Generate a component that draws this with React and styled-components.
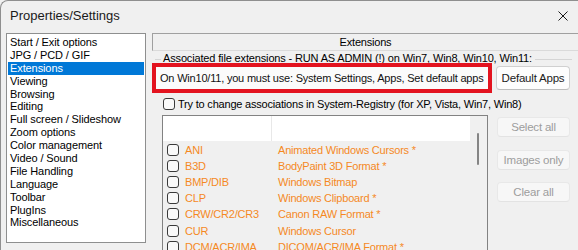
import React from "react";
import styled, { createGlobalStyle } from "styled-components";

const GlobalStyle = createGlobalStyle`
  html, body {
    margin: 0;
    padding: 0;
    background: #f0f0f0;
  }
  body {
    width: 578px;
    height: 250px;
    overflow: hidden;
    font-family: "Liberation Sans", Arial, sans-serif;
    color: #000;
  }
`;

const Window = styled.div`
  width: 578px;
  height: 250px;
  box-sizing: border-box;
  border-left: 1px solid #8f8f8f;
  border-top: 1px solid #8f8f8f;
  border-top-left-radius: 8px;
  background: #f0f0f0;
  display: flex;
  flex-direction: column;
  overflow: hidden;
`;

const TitleBar = styled.div`
  height: 29px;
  flex-shrink: 0;
  display: flex;
  align-items: center;
  justify-content: space-between;
  padding: 0 10px 0 9px;
  font-size: 13px;
  color: #1a1a1a;
`;

const Body = styled.div`
  display: flex;
  flex: 1;
  padding-left: 5px;
  min-height: 0;
`;

const Sidebar = styled.ul`
  list-style: none;
  margin: 3px 0 0 0;
  padding: 2px 1px 0 1px;
  width: 140px;
  height: 210px;
  box-sizing: border-box;
  flex-shrink: 0;
  background: #fff;
  border: 1px solid #8e8f8f;
  font-size: 11px;
  letter-spacing: -0.1px;
`;

const SideItem = styled.li`
  height: 12.9px;
  line-height: 12.9px;
  padding-left: 2px;
  white-space: nowrap;
  background: ${(p) => (p.$active ? "#0078d7" : "transparent")};
  color: ${(p) => (p.$active ? "#fff" : "#000")};
`;

const Main = styled.div`
  flex: 1;
  margin: 3px 0 0 6px;
  display: flex;
  flex-direction: column;
  min-width: 0;
`;

const Tab = styled.div`
  height: 18px;
  box-sizing: border-box;
  border: 1px solid #dadada;
  border-top-color: #a0a0a0;
  border-left-color: #a0a0a0;
  border-right: none;
  text-align: center;
  line-height: 16px;
  font-size: 11px;
  letter-spacing: -0.2px;
`;

const GroupLabel = styled.div`
  margin-top: 2px;
  height: 11px;
  display: flex;
  align-items: center;
  font-size: 11px;
  letter-spacing: -0.15px;
  white-space: nowrap;
`;

const GroupLine = styled.div`
  flex: ${(p) => (p.$grow ? 1 : "none")};
  width: ${(p) => (p.$grow ? "auto" : "6px")};
  margin: ${(p) => (p.$grow ? "2px 6px 0 0" : "2px 0 0 3px")};
  border-top: 1px solid #d5d5d5;
`;

const GroupText = styled.span`
  padding: 0 3px 0 2px;
  line-height: 11px;
`;

const TopRow = styled.div`
  margin-top: -1px;
  display: flex;
  align-items: center;
`;

const Highlight = styled.div`
  width: 340px;
  height: 30px;
  box-sizing: border-box;
  border: 4px solid #e3131f;
  background: #fbfbfb;
  display: flex;
  align-items: center;
  padding-left: 4px;
  font-size: 11px;
  letter-spacing: -0.2px;
  white-space: nowrap;
  color: #111;
`;

const Button = styled.div`
  box-sizing: border-box;
  width: ${(p) => p.$w || 73}px;
  height: ${(p) => p.$h || 20}px;
  border: 1px solid ${(p) => (p.$disabled ? "#e8e8e8" : "#d0d0d0")};
  border-bottom-color: ${(p) => (p.$disabled ? "#e3e3e3" : "#bdbdbd")};
  border-radius: 4px;
  background: ${(p) => (p.$disabled ? "#f7f7f7" : "#fdfdfd")};
  color: ${(p) => (p.$disabled ? "#9d9d9d" : "#1b1b1b")};
  display: flex;
  align-items: center;
  justify-content: center;
  font-size: 11.5px;
  letter-spacing: -0.2px;
  white-space: nowrap;
`;

const DefaultButton = styled(Button)`
  margin-left: 4px;
`;

const CheckRow = styled.label`
  margin: 5px 0 0 11px;
  height: 12px;
  display: flex;
  align-items: center;
  font-size: 11px;
  letter-spacing: -0.2px;
  white-space: nowrap;
`;

const Box = styled.span`
  display: inline-block;
  flex-shrink: 0;
  width: 12px;
  height: 12px;
  box-sizing: border-box;
  border: 1px solid #3a3a3a;
  border-radius: 3px;
  background: #f9f9f9;
  margin-right: ${(p) => p.$gap || 3}px;
`;

const BottomRow = styled.div`
  margin: 5px 0 0 10px;
  display: flex;
  align-items: flex-start;
`;

const ListView = styled.div`
  width: 326px;
  height: 140px;
  box-sizing: border-box;
  border: 1px solid #828282;
  border-bottom: none;
  background: #f0f0f0;
  display: flex;
  flex-shrink: 0;
`;

const ListContent = styled.div`
  flex: 1;
  display: flex;
  flex-direction: column;
`;

const ListHeader = styled.div`
  height: 26px;
  background: #fff;
  display: flex;
`;

const HeaderCell = styled.div`
  width: 108px;
  border-right: 1px solid #e8e8e8;
`;

const Row = styled.div`
  height: 16.6px;
  display: flex;
  align-items: center;
  padding-left: 4px;
  font-size: 11px;
  letter-spacing: -0.2px;
  color: #f5891f;
  white-space: nowrap;
`;

const Ext = styled.span`
  width: 93px;
  flex-shrink: 0;
`;

const Scrollbar = styled.div`
  width: 17px;
  flex-shrink: 0;
  background: #f0f0f0;
`;

const Thumb = styled.div`
  width: 2px;
  height: 32px;
  margin: 17px 0 0 7px;
  border-radius: 1px;
  background: #858585;
`;

const SideButtons = styled.div`
  margin: 2px 0 0 9px;
  display: flex;
  flex-direction: column;
  gap: 12.5px;
`;

const CloseIcon = () => (
  <svg width="10" height="10" viewBox="0 0 10 10">
    <path d="M0.5 0.5 L9.5 9.5 M9.5 0.5 L0.5 9.5" stroke="#1a1a1a" strokeWidth="1" fill="none" />
  </svg>
);

const sections = [
  "Start / Exit options",
  "JPG / PCD / GIF",
  "Extensions",
  "Viewing",
  "Browsing",
  "Editing",
  "Full screen / Slideshow",
  "Zoom options",
  "Color management",
  "Video / Sound",
  "File Handling",
  "Language",
  "Toolbar",
  "PlugIns",
  "Miscellaneous",
];

const formats = [
  ["ANI", "Animated Windows Cursors *"],
  ["B3D", "BodyPaint 3D Format *"],
  ["BMP/DIB", "Windows Bitmap"],
  ["CLP", "Windows Clipboard *"],
  ["CRW/CR2/CR3", "Canon RAW Format *"],
  ["CUR", "Windows Cursor"],
  ["DCM/ACR/IMA", "DICOM/ACR/IMA Format *"],
];

export default function App() {
  return (
    <>
      <GlobalStyle />
      <Window>
        <TitleBar>
          <span>Properties/Settings</span>
          <CloseIcon />
        </TitleBar>
        <Body>
          <Sidebar>
            {sections.map((s) => (
              <SideItem key={s} $active={s === "Extensions"}>
                {s}
              </SideItem>
            ))}
          </Sidebar>
          <Main>
            <Tab>Extensions</Tab>
            <GroupLabel>
              <GroupLine />
              <GroupText>Associated file extensions - RUN AS ADMIN (!) on Win7, Win8, Win10, Win11:</GroupText>
              <GroupLine $grow />
            </GroupLabel>
            <TopRow>
              <Highlight>On Win10/11, you must use: System Settings, Apps, Set default apps</Highlight>
              <DefaultButton $w={74} $h={24}>Default Apps</DefaultButton>
            </TopRow>
            <CheckRow>
              <Box />
              Try to change associations in System-Registry (for XP, Vista, Win7, Win8)
            </CheckRow>
            <BottomRow>
              <ListView>
                <ListContent>
                  <ListHeader>
                    <HeaderCell />
                  </ListHeader>
                  {formats.map(([ext, desc]) => (
                    <Row key={ext}>
                      <Box $gap={6} />
                      <Ext>{ext}</Ext>
                      <span>{desc}</span>
                    </Row>
                  ))}
                </ListContent>
                <Scrollbar>
                  <Thumb />
                </Scrollbar>
              </ListView>
              <SideButtons>
                <Button $disabled>Select all</Button>
                <Button $disabled>Images only</Button>
                <Button $disabled>Clear all</Button>
              </SideButtons>
            </BottomRow>
          </Main>
        </Body>
      </Window>
    </>
  );
}
